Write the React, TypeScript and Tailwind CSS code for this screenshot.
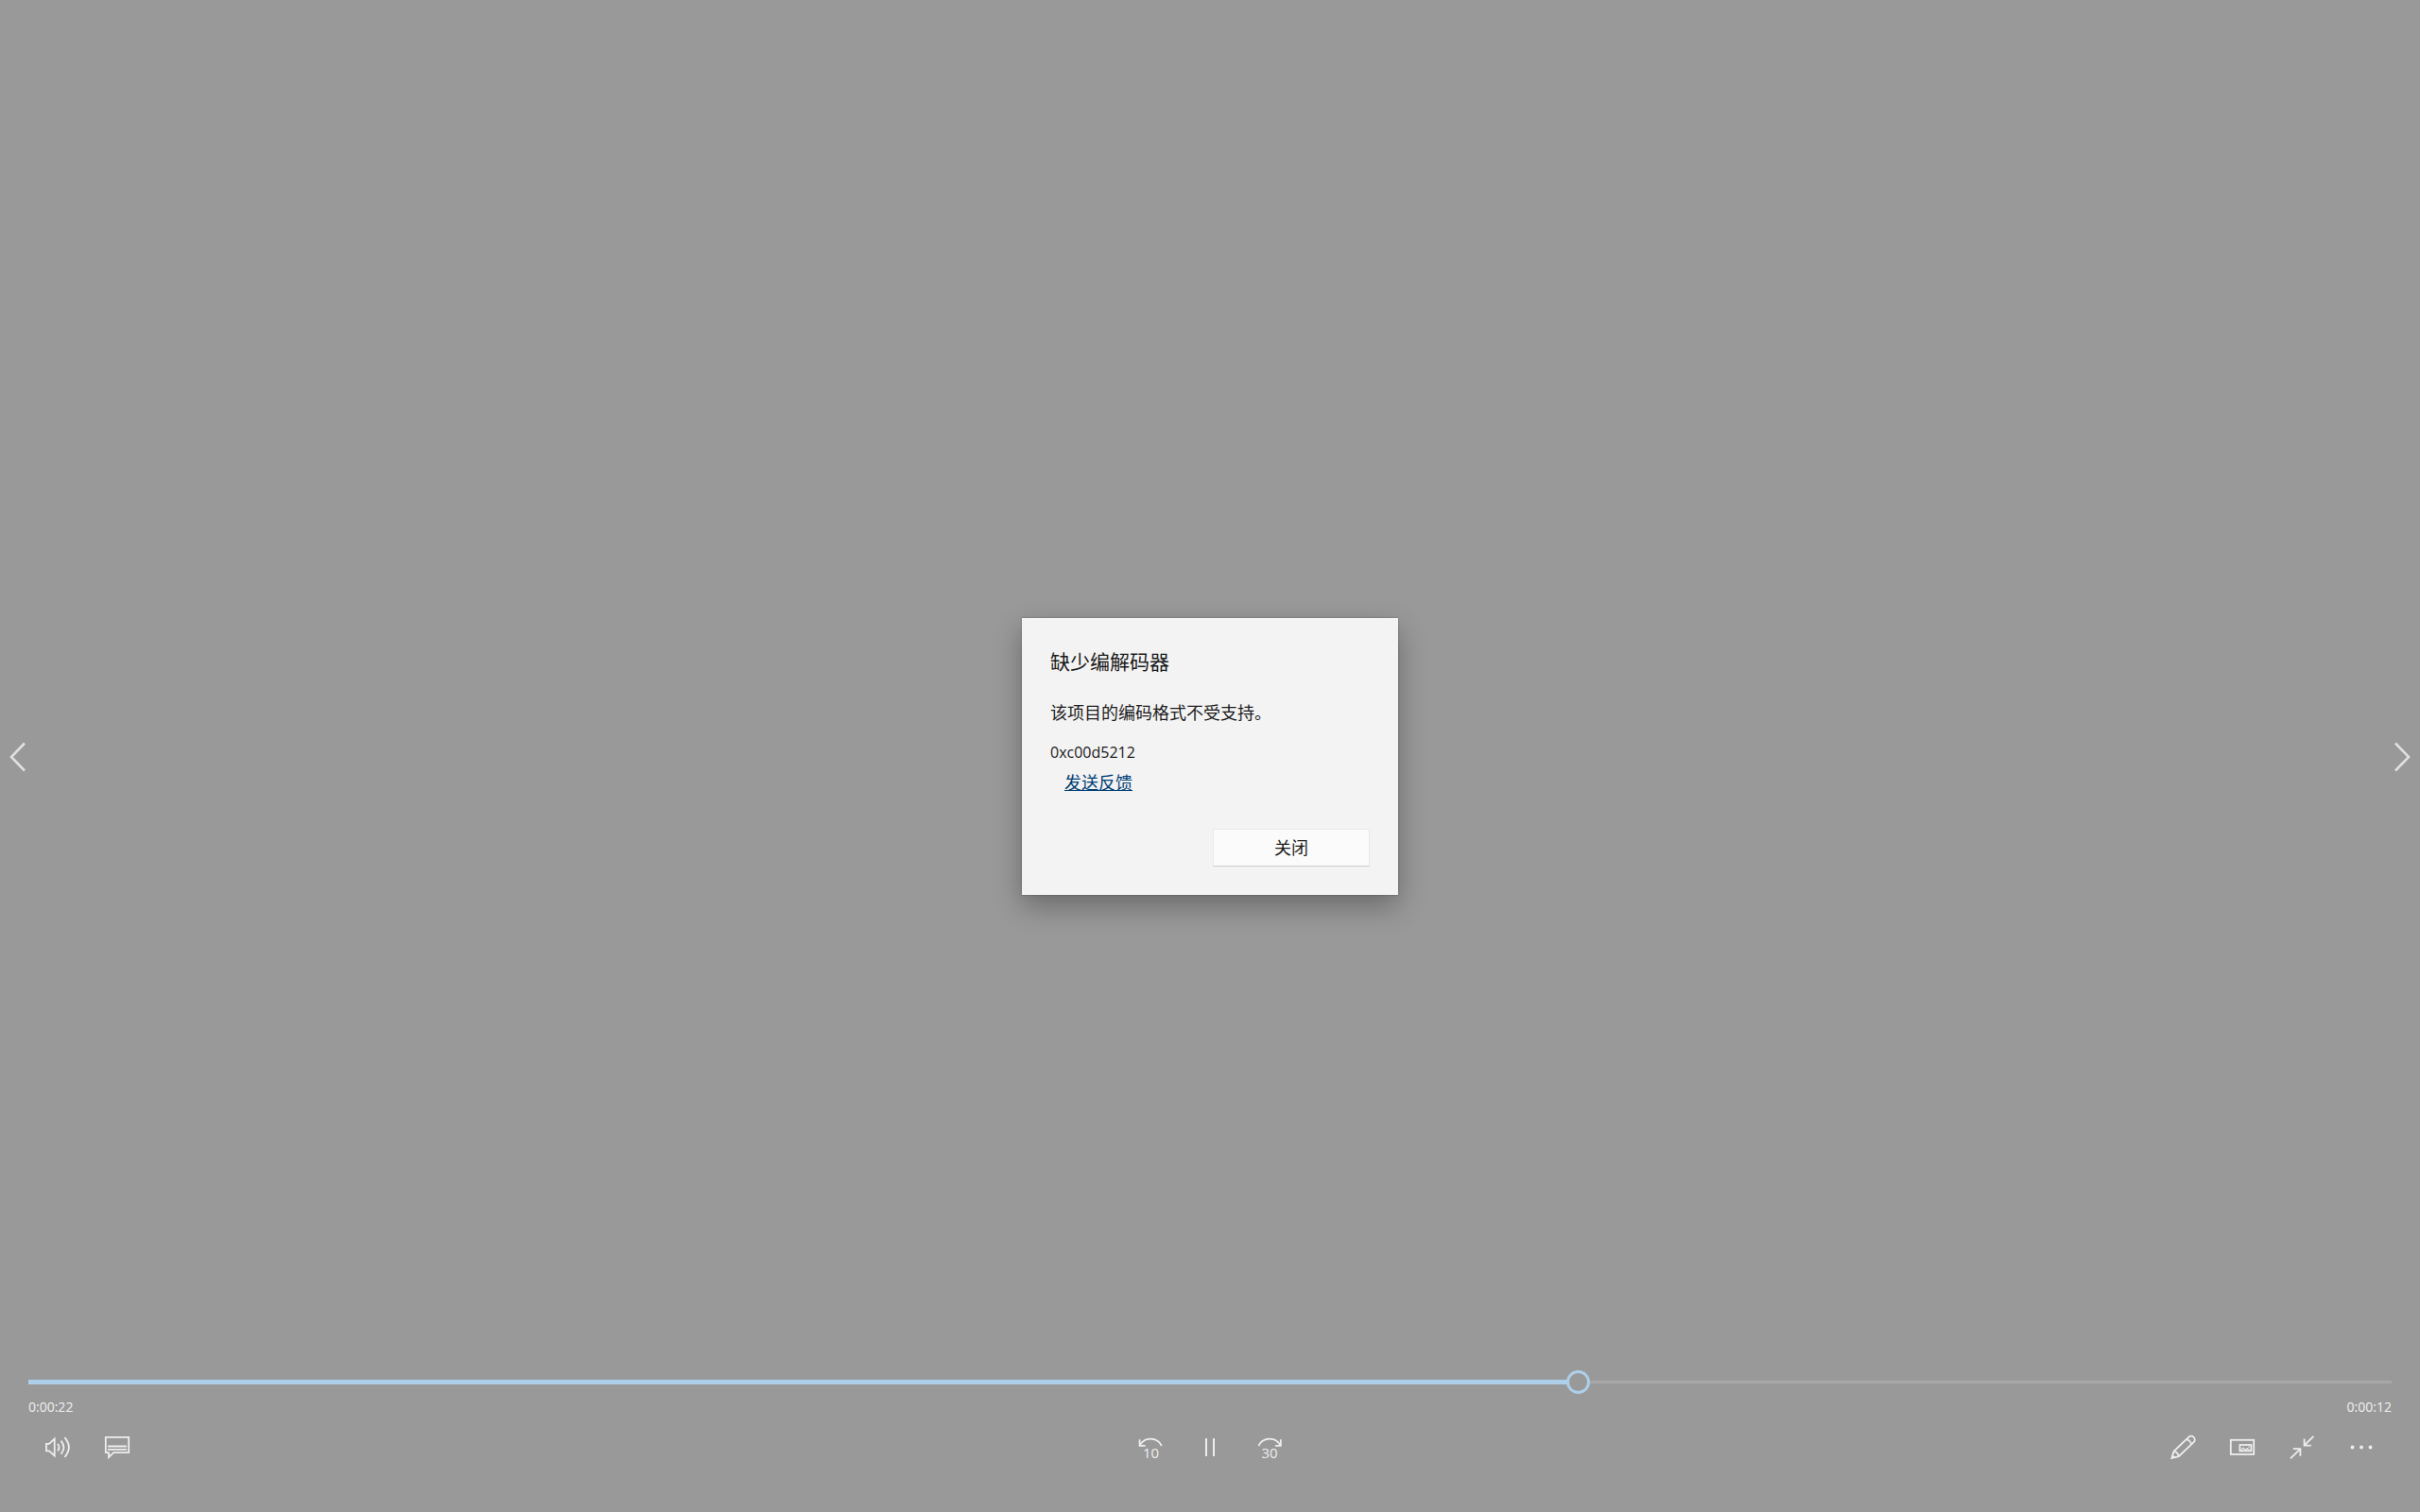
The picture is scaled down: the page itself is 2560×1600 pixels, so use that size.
import { useState, type ReactNode } from "react";

function Icon({ children }: { children: ReactNode }) {
  return (
    <svg
      width="29"
      height="28"
      viewBox="0 0 29 28"
      fill="none"
      stroke="currentColor"
      strokeWidth="1.8"
      aria-hidden="true"
    >
      {children}
    </svg>
  );
}

function IconButton({ label, children }: { label: string; children: ReactNode }) {
  return (
    <button
      type="button"
      aria-label={label}
      className="flex h-16 w-[63px] items-center justify-center text-[#eeeeee]"
    >
      <Icon>{children}</Icon>
    </button>
  );
}

function NavArrow({ label, path }: { label: string; path: string }) {
  return (
    <button type="button" aria-label={label} className="px-2 py-4 text-[#e0e0e0]">
      <svg width="20" height="34" viewBox="0 0 20 34" fill="none" stroke="currentColor" strokeWidth="2.6" aria-hidden="true">
        <path d={path} />
      </svg>
    </button>
  );
}

const DURATION = 34;
const THUMB = 25;

function SeekBar() {
  const [position, setPosition] = useState(22.344);
  const ratio = position / DURATION;
  return (
    <div className="grid h-[25px] items-center">
      <div className="flex items-center [grid-area:1/1]">
        <div className="h-[5px] bg-[#aecfe9]" style={{ width: `calc((100% - ${THUMB}px) * ${ratio} + 1px)` }} />
        <div className="w-[23px]" />
        <div className="h-[3px] grow bg-[#a8a8a8]" />
      </div>
      <input
        type="range"
        aria-label="播放进度"
        min={0}
        max={DURATION}
        step="any"
        value={position}
        onChange={(e) => setPosition(Number(e.target.value))}
        className="m-0 h-[25px] w-full appearance-none bg-transparent [grid-area:1/1] [&::-webkit-slider-thumb]:size-[25px] [&::-webkit-slider-thumb]:appearance-none [&::-webkit-slider-thumb]:rounded-full [&::-webkit-slider-thumb]:border-[3px] [&::-webkit-slider-thumb]:border-[#aecfe9] [&::-webkit-slider-thumb]:bg-transparent"
      />
    </div>
  );
}

function Controls() {
  return (
    <div className="self-end px-[30px] pb-9 [grid-area:1/1]">
      <SeekBar />
      <div className="mt-1 mb-px flex justify-between text-sm leading-5 text-[#f0f0f0]">
        <span>0:00:22</span>
        <span>0:00:12</span>
      </div>
      <div className="grid grid-cols-3">
        <div className="flex">
          <IconButton label="音量">
            <path d="M2 9.8H5L10.7 4.6V22.4L5 17.4H2Z" />
            <path d="M14 9.8Q17 13.6 14 17.4" />
            <path d="M17.6 6.6Q23.2 13.6 17.6 20.6" />
            <path d="M21.4 3.2Q30.4 13.6 21.4 24" />
          </IconButton>
          <IconButton label="字幕">
            <path d="M5 19.2H1.8V2.8H26.2V19.2H10.2L5 24.2Z" />
            <path d="M4 12.5H24M4 15.9H24" />
          </IconButton>
        </div>
        <div className="flex justify-center">
          <IconButton label="后退 10 秒">
            <path d="M3.8 11.6A12.8 12.8 0 0 1 26.8 12" />
            <path d="M3.6 5.2V11.8H9.6" />
            <text x="15.5" y="24.8" fontSize="15" textAnchor="middle" fill="currentColor" stroke="none">
              10
            </text>
          </IconButton>
          <IconButton label="暂停">
            <path d="M11 4V23M19 4V23" strokeWidth="2" />
          </IconButton>
          <IconButton label="前进 30 秒">
            <path d="M3.4 12A12.8 12.8 0 0 1 26.4 11.6" />
            <path d="M26.8 5.2V11.8H21" />
            <text x="15" y="24.8" fontSize="15" textAnchor="middle" fill="currentColor" stroke="none">
              30
            </text>
          </IconButton>
        </div>
        <div className="flex justify-end">
          <IconButton label="编辑">
            <path d="M2.4 25L4.6 17.8L20.2 2.8A3.8 3.8 0 0 1 25.6 8.2L9.8 23.2Z" />
            <path d="M4.6 17.8Q9 18.6 9.8 23.2" />
            <path d="M17.8 5.2Q22.2 6.2 23.2 10.6" />
            <path d="M2.4 25L3.5 21.4L6.2 24Z" fill="currentColor" stroke="none" />
          </IconButton>
          <IconButton label="以迷你视图播放">
            <rect x="1.8" y="5.8" width="24.4" height="15.2" />
            <rect x="11.4" y="11" width="12" height="6.4" />
            <path d="M12.4 16.8L15 14L17.4 16.4L19.4 14.8L21.4 16.4M20.4 13.2H21.6" strokeWidth="1.2" />
          </IconButton>
          <IconButton label="退出全屏">
            <path d="M26.4 1.8L16.8 11.4M16.6 4.4V11.6H23.8" />
            <path d="M2 25.4L12.2 15.4M4.8 15.2H12.4V22.8" />
          </IconButton>
          <IconButton label="查看更多">
            <g fill="currentColor" stroke="none">
              <circle cx="4.5" cy="13.5" r="1.9" />
              <circle cx="14" cy="13.5" r="1.9" />
              <circle cx="23.5" cy="13.5" r="1.9" />
            </g>
          </IconButton>
        </div>
      </div>
    </div>
  );
}

function ErrorDialog() {
  return (
    <div
      role="dialog"
      aria-labelledby="dialog-title"
      className="z-10 flex w-[398px] flex-col place-self-center bg-[#f3f3f3] px-[30px] pt-8 pb-[30px] text-lg leading-6 text-[#1b1b1b] shadow-[0_0_2px_rgba(0,0,0,0.35),0_12px_28px_rgba(0,0,0,0.3)] [grid-area:1/1]"
    >
      <h1 id="dialog-title" className="text-[21px] leading-7 font-normal">
        缺少编解码器
      </h1>
      <p className="mt-7">该项目的编码格式不受支持。</p>
      <p className="mt-[18px] text-base leading-6">0xc00d5212</p>
      <a href="#feedback" className="mt-2 ml-[15px] self-start text-[#003e73] underline">
        发送反馈
      </a>
      <button
        type="button"
        className="mt-[37px] h-10 w-[166px] self-end border border-[#e9e9e9] border-b-[#cccccc] bg-[#fbfbfb]"
      >
        关闭
      </button>
    </div>
  );
}

export default function App() {
  return (
    <main className="grid min-h-screen grid-cols-1 bg-[#999999] font-['Open_Sans','Noto_Sans_CJK_SC',sans-serif]">
      <div className="flex items-center justify-between [grid-area:1/1]">
        <NavArrow label="上一个" path="M18 3.5L4 18L18 32.5" />
        <NavArrow label="下一个" path="M2 3.5L16 18L2 32.5" />
      </div>
      <Controls />
      <ErrorDialog />
    </main>
  );
}
